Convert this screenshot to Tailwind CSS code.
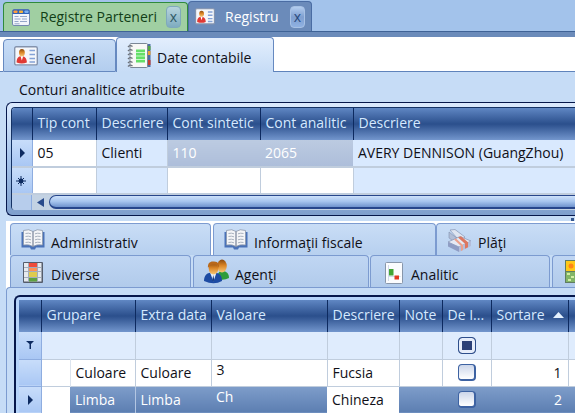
<!DOCTYPE html>
<html lang="ro">
<head>
<meta charset="utf-8">
<meta name="viewport" content="width=device-width, initial-scale=1">
<title>Registru</title>
<script src="https://cdn.jsdelivr.net/npm/@tailwindcss/browser@4"></script>
</head>
<body class="h-screen overflow-hidden bg-[#c6dcf6] font-['Open_Sans','Noto_Sans',sans-serif] text-sm leading-5 text-[#101018] [font-feature-settings:'locl'_0]">
<svg class="absolute h-0 w-0" aria-hidden="true">
  <defs>
    <linearGradient id="skin" x1="0" y1="0" x2="0" y2="1"><stop offset="0" stop-color="#8a4a10"/><stop offset=".45" stop-color="#d98324"/><stop offset="1" stop-color="#f8c877"/></linearGradient>
    <symbol id="card" viewBox="0 0 24 20">
      <rect x=".7" y=".7" width="22.6" height="18.2" rx="1.5" fill="#f5f7fb" stroke="#8493ad" stroke-width="1.4"/>
      <path d="M2.600 16.500c0-4.500 1.800-6.300 4.900-6.300s5.400 1.800 5.400 6.300q-5 2-10.300 0z" fill="#e03a35"/>
      <path d="M6.500 10l1.300 4.500L9.300 10z" fill="#fff"/>
      <ellipse cx="7.900" cy="6.700" rx="2.900" ry="3.700" fill="url(#skin)"/>
      <path d="M15.500 4.500h5.500M15.500 8.500h5.500M15.500 12.500h5.500M15.500 16h5.500" stroke="#84a2d6" stroke-width="1.700"/>
    </symbol>
    <symbol id="book" viewBox="0 0 24 21">
      <path d="M.5 3h23v15.500h-8.500l-1 2h-4l-1-2H.5z" fill="#4a72b8"/>
      <path d="M2.500 1.500Q8-.5 12 2.500 16-.5 21.500 1.500v14.500q-6-1-9.500 1.500-3.500-2.500-9.500-1.500z" fill="#f4f5f7" stroke="#8c97aa" stroke-width=".8"/>
      <path d="M12 2.500v15" stroke="#778398" stroke-width="1.200"/>
      <path d="M4.500 4.500q3-.8 5.500.3M4.500 7.500q3-.8 5.500.3M4.500 10.500q3-.8 5.500.3M4.500 13.500q3-.8 5.500.3M14 4.800q2.500-1 5.500-.3M14 7.800q2.500-1 5.500-.3M14 10.800q2.500-1 5.500-.3M14 13.800q2.500-1 5.500-.3" fill="none" stroke="#a9b2bf" stroke-width="1"/>
    </symbol>
  </defs>
</svg>

<div class="flex h-8 items-end border-b border-[#3f6396] bg-[#a3c3eb] pl-[3px]" role="tablist" aria-label="Ferestre">
  <div class="flex h-[29px] w-[185px] items-center rounded-t border border-b-0 border-[#2f8a3c] bg-[#a0cfa2] pl-2">
    <svg class="mr-2.5 h-[17px] w-[18px] shrink-0" viewBox="0 0 18 17" aria-hidden="true">
      <rect x=".5" y=".5" width="17" height="16" rx="1.500" fill="#f2f5fb" stroke="#7389ae"/>
      <path d="M.5 5V2Q.5.500 2 .5h14q1.500 0 1.500 1.500v3z" fill="#2f62b8"/>
      <rect x="1.500" y="1.500" width="4" height="2.500" rx=".7" fill="#ff9c3d"/><rect x="7" y="1.500" width="4" height="2.500" rx=".7" fill="#f4b13c"/><rect x="12.500" y="1.500" width="4" height="2.500" rx=".7" fill="#7fb0ec"/>
      <path d="M2.500 7.500h4M8 7.500h7M2.500 10h6M10 10h5M2.500 12.500h4M8 12.500h7M2.500 14.800h5" stroke="#94a6c8"/>
    </svg>
    <button role="tab" class="w-[126px] text-left whitespace-nowrap text-[#123f17]">Registre Parteneri</button>
    <button aria-label="Închide Registre Parteneri" class="flex h-[22px] w-[15px] items-center justify-center rounded border border-[#7fa9bc] bg-linear-to-b from-[#b8d4dd] to-[#7eacc0] text-sm leading-3 text-[#2f5965]">x</button>
  </div>
  <div class="flex h-[30px] w-[124px] items-center rounded-t border border-b-0 border-[#4a6ca3] bg-[#6b8bba] pl-1.5">
    <svg class="mr-2.5 h-[17px] w-[20px] shrink-0" aria-hidden="true"><use href="#card"/></svg>
    <button role="tab" aria-selected="true" class="w-[65px] text-left text-white">Registru</button>
    <button aria-label="Închide Registru" class="flex h-[22px] w-[15px] items-center justify-center rounded border border-[#a7c1e4] bg-linear-to-b from-[#b3cdef] via-[#7f9fd0] to-[#8fb1e2] text-sm leading-3 text-[#294a7d]">x</button>
  </div>
</div>
<div class="h-[5px] bg-[#6b8bba]"></div>

<div class="flex h-[35px] items-end bg-white" role="tablist" aria-label="Secțiuni">
  <div class="w-[3px] self-stretch border-b border-[#5f83bb]"></div>
  <button role="tab" class="flex h-[33px] w-[113px] items-center rounded-t border border-[#6689c0] bg-linear-to-b from-[#c8ddf6] to-[#b3cdee] pl-2.5">
    <svg class="mr-1.5 h-5 w-6" aria-hidden="true"><use href="#card"/></svg><span class="pt-1.5">General</span>
  </button>
  <button role="tab" aria-selected="true" class="flex h-[35px] w-[158px] items-center rounded-t border border-b-0 border-[#6689c0] bg-linear-to-b from-[#e3eefd] to-[#c6dcf6] pl-2.5">
    <svg class="mr-1.5 h-[25px] w-6 shrink-0" viewBox="0 0 24 25" aria-hidden="true">
      <rect x="20" y="1" width="3.500" height="23" fill="#4c6ea5"/><path d="M20 3h3.500v4H20z" fill="#56a843"/><path d="M20 8h3.500v4H20z" fill="#e9a432"/><path d="M20 17h3.500v5H20z" fill="#c83c2e"/>
      <rect x="3" y=".5" width="17.500" height="24" rx="1" fill="#f8f8f6" stroke="#7b8796"/>
      <rect x="9" y="6.500" width="9" height="13" fill="#65df68"/><path d="M9 9.500h9M9 13h9M9 16.500h9" stroke="#c8f7ca"/>
      <path d="M1 4q2-2.500 4.500-.5M1 8q2-2.500 4.500-.5M1 12q2-2.500 4.500-.5M1 16q2-2.500 4.500-.5M1 20q2-2.500 4.500-.5M1 23.500q2-2.500 4.500-.5" fill="none" stroke="#6b7079" stroke-width="1.300"/>
    </svg><span class="pt-1.5 whitespace-nowrap">Date contabile</span>
  </button>
  <div class="grow self-stretch border-b border-[#5f83bb]"></div>
</div>

<main>
  <h2 class="flex h-[30px] items-center pt-1.5 pl-[19px]">Conturi analitice atribuite</h2>

  <div class="ml-1.5 overflow-hidden rounded-l-md border border-r-0 border-[#06174b] bg-linear-to-b from-[#dceafd] via-[#a7c5ec] to-[#7f9fcd] pt-[4px] pb-[5px] pl-[4px]">
    <div class="overflow-hidden rounded-l border-t border-l border-[#153264]">
      <table class="w-full table-fixed border-collapse text-left whitespace-nowrap">
        <colgroup><col class="w-[20px]"><col class="w-[64px]"><col class="w-[71px]"><col class="w-[93px]"><col class="w-[93px]"><col></colgroup>
        <thead>
          <tr class="h-8 bg-linear-to-b from-[#6087c3] via-[#2b4f8c] to-[#7396cd] text-[#d5e9ff]">
            <th class="border-r border-[#0d2a60]" aria-label="Stare"></th>
            <th class="border-r border-[#0d2a60] pb-0.5 pl-[5px] font-normal">Tip cont</th>
            <th class="border-r border-[#0d2a60] pb-0.5 pl-[5px] font-normal">Descriere</th>
            <th class="border-r border-[#0d2a60] pb-0.5 pl-[5px] font-normal">Cont sintetic</th>
            <th class="border-r border-[#0d2a60] pb-0.5 pl-[5px] font-normal">Cont analitic</th>
            <th class="pb-0.5 pl-[5px] font-normal">Descriere</th>
          </tr>
        </thead>
        <tbody>
          <tr class="h-[27px] border-b-2 border-[#c0cddd]">
            <td class="border-r border-b border-[#8eade0] bg-linear-to-b from-[#c8ddfa] to-[#a9c7f4]"><svg class="ml-2 h-2.5 w-[5px]" viewBox="0 0 5 10" aria-hidden="true"><path d="M0 0l5 5-5 5z" fill="#0d2a60"/></svg></td>
            <td class="border-r border-[#c0cddd] bg-white pl-[5px]">05</td>
            <td class="border-r border-[#c0cddd] bg-[#d9e9fe] pl-[5px]">Clienti</td>
            <td class="bg-linear-to-b from-[#bccbe1] to-[#adbeda] pl-[5px] text-white">110</td>
            <td class="bg-linear-to-b from-[#bccbe1] to-[#adbeda] pl-[5px] text-white">2065</td>
            <td class="bg-[#d9e9fe] pl-[5px]">AVERY DENNISON (GuangZhou)</td>
          </tr>
          <tr class="h-[27px] border-b-2 border-[#c0cddd]">
            <td class="border-r border-b border-[#8eade0] bg-linear-to-b from-[#c8ddfa] to-[#a9c7f4]"><svg class="ml-1 h-2.5 w-2.5" viewBox="0 0 10 10" aria-hidden="true"><path d="M5 0v10M0 5h10M2 2l6 6M8 2l-6 6" stroke="#0d2a60"/><circle cx="5" cy="5" r="2.400" fill="#0d2a60"/></svg></td>
            <td class="border-r border-[#c0cddd] bg-white"></td>
            <td class="border-r border-[#c0cddd] bg-[#d9e9fe]"></td>
            <td class="border-r border-[#c0cddd] bg-white"></td>
            <td class="border-r border-[#c0cddd] bg-white"></td>
            <td class="bg-[#d9e9fe]"></td>
          </tr>
        </tbody>
      </table>
      <div class="flex h-[15px] bg-[#c3d2e3]">
        <div class="w-5 shrink-0 rounded-bl border-r border-[#8eade0] bg-[#b7cdec]"></div>
        <button aria-label="Derulare la stânga" class="flex w-[17px] shrink-0 items-center justify-center"><svg class="h-[9px] w-[7px]" viewBox="0 0 7 9" aria-hidden="true"><path d="M7 0v9L0 4.500z" fill="#284a8b"/></svg></button>
        <div class="h-[14px] grow rounded-l-full border border-r-0 border-b-2 border-[#27468b] bg-linear-to-b from-[#cde1fb] via-[#a6c4ed] to-[#6f93cd]"></div>
      </div>
    </div>
  </div>

  <div class="flex h-[5px] items-end justify-end pr-[1px]"><span class="h-[3px] w-[3px] bg-[#35578f]"></span></div>

  <section class="ml-1.5 bg-white">
    <div role="tablist" aria-label="Detalii partener">
      <div class="flex h-[34px] pt-0.5 pl-1">
        <button role="tab" class="flex h-8 w-[201px] shrink-0 items-center rounded-t border border-b-0 border-[#7c9bd0] bg-linear-to-b from-[#c9ddf6] to-[#b7d0ef] pt-1.5 pl-2.5"><svg class="mr-1.5 mb-1.5 h-[21px] w-6" aria-hidden="true"><use href="#book"/></svg>Administrativ</button>
        <button role="tab" class="ml-0.5 flex h-8 w-[223px] shrink-0 items-center rounded-t border border-b-0 border-[#7c9bd0] bg-linear-to-b from-[#c9ddf6] to-[#b7d0ef] pt-1.5 pl-2.5"><svg class="mr-1.5 mb-1.5 h-[21px] w-6" aria-hidden="true"><use href="#book"/></svg>Informaţii fiscale</button>
        <button role="tab" class="flex h-8 grow items-center rounded-tl border border-r-0 border-b-0 border-[#7c9bd0] bg-linear-to-b from-[#c9ddf6] to-[#b7d0ef] pt-1.5 pl-2.5">
          <svg class="mr-1.5 mb-1 h-[23px] w-[25px]" viewBox="0 0 25 23" aria-hidden="true">
            <path d="M3 1l5-.5 10 7.500-5 4.500z" fill="#dfe5f1" stroke="#8795b5" stroke-width=".7"/><path d="M2 3l10 8v5L2 9z" fill="#b3bed6" stroke="#8190b0" stroke-width=".6"/>
            <path d="M1 13l12-5.500 11 4.500-12 6z" fill="#e6eaf4" stroke="#8190b3" stroke-width=".7"/><path d="M1 13l11 5v5L1 17.500z" fill="#8f9dc4"/><path d="M12 18l12-6v5l-12 6z" fill="#b4bedb"/>
            <path d="M11 8.500l3-1.200 7 6v5l-3 1.500v-5z" fill="#dc7862"/><path d="M7 10.500l2-1 7 6.500v5l-2 1v-5z" fill="#eba18d"/>
          </svg>Plăţi
        </button>
      </div>
      <div class="flex h-8 bg-[#c6dcf6]">
        <div class="w-1 shrink-0 bg-white"></div>
        <button role="tab" class="flex w-[181px] shrink-0 items-center rounded-t border border-b-0 border-[#7c9bd0] bg-linear-to-b from-[#c0d6f3] to-[#b1cbeb] pt-1.5 pl-3">
          <svg class="mr-2 mb-1 h-[21px] w-5" viewBox="0 0 20 21" aria-hidden="true"><rect width="20" height="21" rx="1" fill="#555d6c"/><path d="M1 1h17.500v18.500H1z" fill="#e6eaef"/><path d="M6 1h8v4H6z" fill="#ef4c3b"/><path d="M6 6h8v3H6z" fill="#ff9155"/><path d="M6 10h8v5H6z" fill="#dfcb4e"/><path d="M6 16h8v3.500H6z" fill="#5fa241"/><path d="M1 5.500h17M1 9.500h17M1 15.500h17M5.500 1v18.500M14.500 1v18.500" stroke="#a3adbb"/></svg>Diverse
        </button>
        <button role="tab" class="ml-0.5 flex w-[176px] shrink-0 items-center rounded-t border border-b-0 border-[#7c9bd0] bg-linear-to-b from-[#c0d6f3] to-[#b1cbeb] pt-1.5 pl-2.5">
          <svg class="mr-1.5 mb-1.5 h-[25px] w-[25px]" viewBox="0 0 25 25" aria-hidden="true">
            <path d="M13 20c0-5 2-8 5-8 5 0 7 3 7 7q-5 3-12 1z" fill="#2e9c3b"/><ellipse cx="18" cy="7" rx="4.800" ry="6.500" fill="url(#skin)"/>
            <path d="M0 22c0-6 3-8.500 9-8.500s9 2.500 9 8.500q-8 4.500-18 0z" fill="#1d4ba3"/><path d="M6 13.500l3.500 9 3-9z" fill="#e5effd"/><path d="M9.300 16l1 5-1 1.500-1-1.500z" fill="#16397d"/>
            <ellipse cx="9.500" cy="9.500" rx="4.800" ry="6" fill="url(#skin)"/><path d="M4 9C3.500 4 6 2 10 2.500c4.500 0 5.500 3 5 6.500-1-2.500-2-3.500-5-3.500S5.500 6.500 4 9z" fill="#b8681b"/>
          </svg>Agenţi
        </button>
        <button role="tab" class="ml-px flex w-[180px] shrink-0 items-center rounded-t border border-b-0 border-[#7c9bd0] bg-linear-to-b from-[#c0d6f3] to-[#b1cbeb] pt-1.5 pl-3.5">
          <svg class="mr-2 mb-1 h-[22px] w-[18px]" viewBox="0 0 18 22" aria-hidden="true"><rect x=".5" y=".5" width="17" height="21" rx="1" fill="#fbfcfe" stroke="#8896aa"/><path d="M3.500 3v16M3.500 14.500h12" stroke="#d1dbe8"/><rect x="4" y="7" width="4.500" height="6.500" fill="#43a435"/><rect x="9.500" y="13.500" width="4.500" height="4" fill="#e23823"/></svg>Analitic
        </button>
        <button role="tab" aria-label="Matrice" class="ml-0.5 flex min-w-0 grow items-center overflow-hidden rounded-tl border border-r-0 border-b-0 border-[#7c9bd0] bg-linear-to-b from-[#c0d6f3] to-[#b1cbeb] pl-3">
          <svg class="h-[23px] w-[22px] shrink-0" viewBox="0 0 22 23" aria-hidden="true"><rect width="22" height="23" fill="#607c62"/><path d="M1 1h9v10H1z" fill="#ffc918"/><circle cx="6" cy="6" r="2.500" fill="#ff8616"/><path d="M1 12h9v10H1z" fill="#82b568"/><path d="M2 14h3M6 17h3M3 20h3" stroke="#d1eda3" stroke-width="2"/><path d="M11 1h10v10H11z" fill="#ffdc57"/><path d="M11 12h10v10H11z" fill="#76b66a"/></svg>
        </button>
      </div>
    </div>

    <div class="rounded-tl border-t border-l border-[#7c9bd0] bg-[#c6dcf6] pt-[7px] pl-[7px]">
      <div class="overflow-hidden rounded-tl-md border-t-2 border-l-2 border-[#06174b] bg-[#b5d3fa] pt-[3px] pl-[3px]">
        <table class="w-full table-fixed border-collapse text-left whitespace-nowrap">
          <colgroup><col class="w-[22px]"><col class="w-[29px]"><col class="w-[65px]"><col class="w-[76px]"><col class="w-[116px]"><col class="w-[72px]"><col class="w-[43px]"><col class="w-[49px]"><col class="w-[77px]"><col></colgroup>
          <thead>
            <tr class="h-8 bg-linear-to-b from-[#6087c3] via-[#2b4f8c] to-[#7396cd] text-[#d5e9ff]">
              <th class="border-r border-[#0d2a60]" aria-label="Stare"></th>
              <th colspan="2" class="border-r border-[#0d2a60] pb-0.5 pl-[5px] font-normal">Grupare</th>
              <th class="border-r border-[#0d2a60] pb-0.5 pl-[5px] font-normal">Extra data</th>
              <th class="border-r border-[#0d2a60] pb-0.5 pl-[5px] font-normal">Valoare</th>
              <th class="border-r border-[#0d2a60] pb-0.5 pl-[5px] font-normal">Descriere</th>
              <th class="border-r border-[#0d2a60] pb-0.5 pl-[5px] font-normal">Note</th>
              <th class="border-r border-[#0d2a60] pb-0.5 pl-[5px] font-normal">De I...</th>
              <th class="border-r border-[#0d2a60] pb-0.5 pl-[5px] font-normal" aria-sort="ascending"><span class="flex items-center justify-between pr-1">Sortare<svg class="h-[6px] w-[11px]" viewBox="0 0 11 6" aria-hidden="true"><path d="M5.500 0L11 6H0z" fill="#e4f1ff"/></svg></span></th>
              <th></th>
            </tr>
          </thead>
          <tbody>
            <tr class="h-[27px] border-b border-[#c0cddd] bg-[#dfecfd]">
              <td class="border-r border-b border-[#8eade0] bg-linear-to-b from-[#c8ddfa] to-[#a9c7f4]"><svg class="ml-[7px] h-2 w-2" viewBox="0 0 8 8" aria-hidden="true"><path d="M0 0h8L5 3v5H3.500V3z" fill="#0d2a60"/></svg></td>
              <td colspan="2" class="border-r border-[#c0cddd]"></td>
              <td class="border-r border-[#c0cddd]"></td>
              <td class="border-r border-[#c0cddd]"></td>
              <td class="border-r border-[#c0cddd]"></td>
              <td class="border-r border-[#c0cddd]"></td>
              <td class="border-r border-[#c0cddd]"><input type="checkbox" checked aria-label="Filtru De I..." class="mx-auto block h-[17px] w-[18px] appearance-none rounded-sm border border-[#2e4f8c] checked:bg-[#2b4077] checked:shadow-[inset_0_0_0_3px_#e6edfa]"></td>
              <td class="border-r border-[#c0cddd]"></td>
              <td></td>
            </tr>
            <tr class="h-[27px] border-b border-[#c0cddd] bg-white">
              <td class="border-r border-b border-[#8eade0] bg-linear-to-b from-[#c8ddfa] to-[#a9c7f4]"></td>
              <td class="border-r border-[#dce4ee]"></td>
              <td class="border-r border-[#c0cddd] pl-[5px]">Culoare</td>
              <td class="border-r border-[#c0cddd] pl-[5px]">Culoare</td>
              <td class="border-r border-[#c0cddd] pl-[5px] align-top">3</td>
              <td class="border-r border-[#c0cddd] pl-[5px]">Fucsia</td>
              <td class="border-r border-[#c0cddd]"></td>
              <td class="border-r border-[#c0cddd]"><input type="checkbox" aria-label="De I... Culoare" class="mx-auto block h-[17px] w-[18px] appearance-none rounded-sm border border-r-2 border-b-2 border-[#3d62a2] bg-linear-to-b from-[#ccd6ea] to-white"></td>
              <td class="border-r border-[#c0cddd] pr-1.5 text-right">1</td>
              <td></td>
            </tr>
            <tr class="h-[27px] border-b border-[#c0cddd] text-white">
              <td class="border-r border-b border-[#8eade0] bg-linear-to-b from-[#c8ddfa] to-[#a9c7f4]"><svg class="ml-[9px] h-2.5 w-[5px]" viewBox="0 0 5 10" aria-hidden="true"><path d="M0 0l5 5-5 5z" fill="#0d2a60"/></svg></td>
              <td class="bg-white"></td>
              <td class="border-r border-[#b3c6e2] bg-linear-to-b from-[#7e9dca] to-[#5c7eb1] pl-[5px]">Limba</td>
              <td class="bg-linear-to-b from-[#7e9dca] to-[#5c7eb1] pl-[5px]">Limba</td>
              <td class="bg-linear-to-b from-[#7e9dca] to-[#5c7eb1] pl-[5px] align-top">Ch</td>
              <td class="bg-white pl-[5px] text-[#101018]">Chineza</td>
              <td class="bg-linear-to-b from-[#7e9dca] to-[#5c7eb1]"></td>
              <td class="bg-linear-to-b from-[#7e9dca] to-[#5c7eb1]"><input type="checkbox" aria-label="De I... Limba" class="mx-auto block h-[17px] w-[18px] appearance-none rounded-sm border border-r-2 border-b-2 border-[#3d62a2] bg-linear-to-b from-[#ccd6ea] to-white"></td>
              <td class="bg-linear-to-b from-[#7e9dca] to-[#5c7eb1] pr-1.5 text-right">2</td>
              <td class="bg-linear-to-b from-[#7e9dca] to-[#5c7eb1]"></td>
            </tr>
          </tbody>
        </table>
      </div>
    </div>
  </section>
</main>
</body>
</html>
